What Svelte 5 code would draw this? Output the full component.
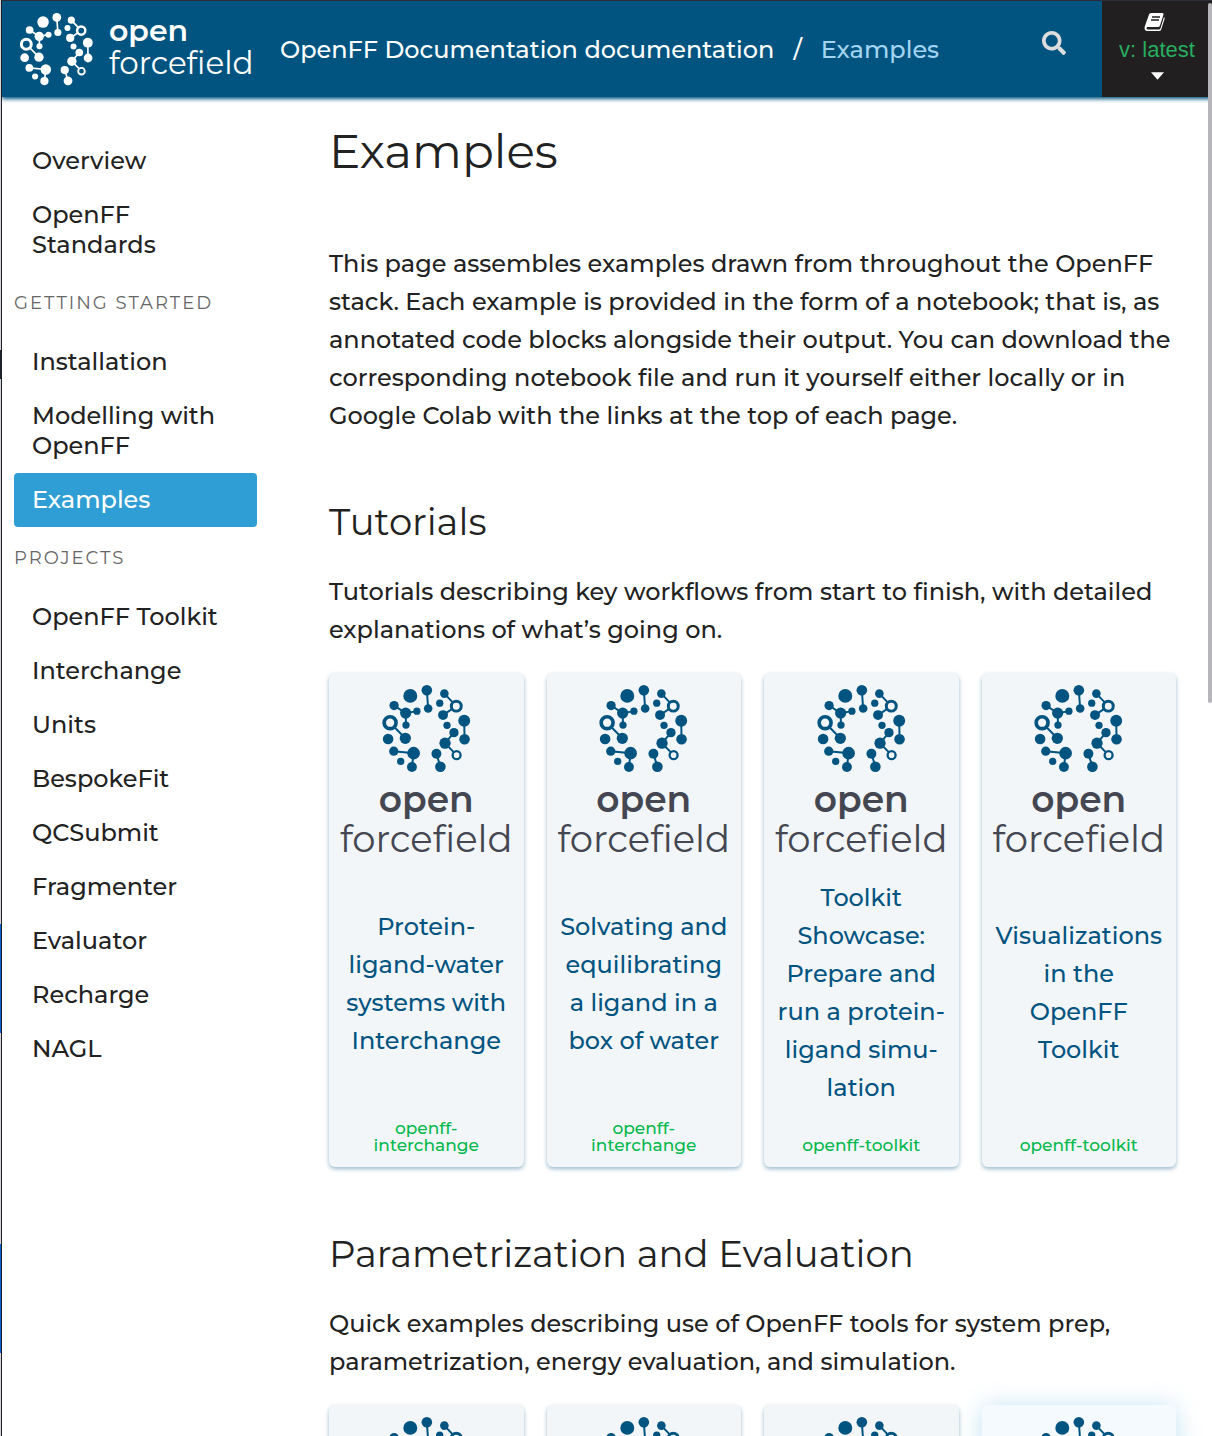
<script>
  const nav = [
    { items: ['Overview', 'OpenFF Standards'] },
    { caption: 'Getting started', items: ['Installation', 'Modelling with OpenFF', 'Examples'] },
    {
      caption: 'Projects',
      items: ['OpenFF Toolkit', 'Interchange', 'Units', 'BespokeFit', 'QCSubmit', 'Fragmenter', 'Evaluator', 'Recharge', 'NAGL']
    }
  ];
  const current = 'Examples';

  const tutorials = [
    { title: 'Protein-ligand-water systems with Interchange', pkg: 'openff-interchange' },
    { title: 'Solvating and equilibrating a ligand in a box of water', pkg: 'openff-interchange' },
    { title: 'Toolkit Showcase: Prepare and run a protein-ligand simu\u00adlation', pkg: 'openff-toolkit' },
    { title: 'Visualizations in the OpenFF Toolkit', pkg: 'openff-toolkit' }
  ];
  const evaluation = [{}, {}, {}, { active: true }];
</script>

{#snippet mark()}
  <svg class="mark" viewBox="36 14 266 266" aria-hidden="true">
    <path
      d="M170 30L174 85M223 40L259 78L219 105M71 76L106 99L140 93M106 99L107 135M59 128L105 175M70 214L130 220L125 262M199 222L211 261M252 158L225 190L260 226M283 122L284 178"
      fill="none" stroke="currentColor" stroke-width="6" />
    <g fill="currentColor">
      <circle cx="120" cy="47" r="21" /><circle cx="170" cy="30" r="16" /><circle cx="174" cy="85" r="13" />
      <circle cx="223" cy="40" r="13" /><circle cx="219" cy="105" r="15" /><circle cx="209" cy="69" r="11" />
      <circle cx="71" cy="76" r="14" /><circle cx="106" cy="99" r="17" /><circle cx="140" cy="93" r="11" />
      <circle cx="107" cy="135" r="11" /><circle cx="105" cy="175" r="17" /><circle cx="53" cy="177" r="16" />
      <circle cx="70" cy="214" r="14" /><circle cx="130" cy="220" r="19" /><circle cx="125" cy="262" r="15" />
      <circle cx="91" cy="245" r="11" /><circle cx="199" cy="222" r="15" /><circle cx="211" cy="261" r="16" />
      <circle cx="231" cy="136" r="11" /><circle cx="252" cy="158" r="14" /><circle cx="225" cy="190" r="17" />
      <circle cx="283" cy="122" r="18" /><circle cx="284" cy="178" r="16" />
    </g>
    <g class="rings" stroke="currentColor">
      <circle cx="59" cy="128" r="18" stroke-width="11" />
      <circle cx="259" cy="78" r="15" stroke-width="9" />
      <circle cx="260" cy="226" r="12" stroke-width="7" />
    </g>
  </svg>
{/snippet}

{#snippet card(item)}
  <a class="card" class:active={item.active} href="#example">
    <span class="thumb">
      {@render mark()}
      <span class="word-open">open</span>
      <span class="word-field">forcefield</span>
    </span>
    <span class="title">{item.title ?? ''}</span>
    <span class="pkg">{item.pkg ?? ''}</span>
  </a>
{/snippet}

<div class="page">
  <header>
    <a class="brand" href="#home" aria-label="open forcefield">
      {@render mark()}
      <span class="brand-text"><b>open</b><span>forcefield</span></span>
    </a>
    <nav class="crumbs" aria-label="Breadcrumb">
      <a href="#docs">OpenFF Documentation documentation</a>
      <span>/</span>
      <a class="here" href="#examples">Examples</a>
    </nav>
    <button class="search" aria-label="Search">
      <svg viewBox="0 0 512 512" width="24" height="24"><path fill="currentColor" d="M505 442.700 405.300 343c-4.500-4.500-10.600-7-17-7H372c27.600-35.300 44-79.700 44-128C416 93.100 322.900 0 208 0S0 93.100 0 208s93.100 208 208 208c48.300 0 92.700-16.400 128-44v16.300c0 6.400 2.500 12.500 7 17l99.700 99.700c9.400 9.400 24.600 9.400 33.900 0l28.300-28.300c9.400-9.400 9.400-24.600.1-34zM208 336c-70.700 0-128-57.200-128-128 0-70.700 57.200-128 128-128 70.700 0 128 57.200 128 128 0 70.700-57.200 128-128 128z" /></svg>
    </button>
    <button class="version">
      <svg class="book" viewBox="0 0 21 20" width="21" height="20" aria-hidden="true">
        <path fill="#fff" d="M7 1h11.500q1.500 0 1 1.500l-3.500 11q-.5 1.500-2 1.500H4q-1.500 0-1.500 1.200T4 17.500h11q1 0 1.400-1L20 5q1 .5.600 1.800l-3.400 10.700q-.5 1.500-2.200 1.500H3.500Q0 19 .6 15L5 2.500Q5.500 1 7 1z" />
        <path stroke="#211f1f" stroke-width="1.300" d="M8 5h8M7 8h8" />
      </svg>
      <span>v: latest</span>
      <svg viewBox="0 0 12 7" width="13" height="8" aria-hidden="true"><path fill="#fff" d="M0 0h12L6 7z" /></svg>
    </button>
  </header>

  <div class="body">
    <nav class="side" aria-label="Contents">
      {#each nav as group}
        {#if group.caption}<p class="caption">{group.caption}</p>{/if}
        <ul>
          {#each group.items as item}
            <li><a href="#{item}" class:current={item === current}>{item}</a></li>
          {/each}
        </ul>
      {/each}
    </nav>

    <main>
      <h1>Examples</h1>
      <p class="intro">This page assembles examples drawn from throughout the OpenFF stack. Each example is provided in the form of a notebook; that is, as annotated code blocks alongside their output. You can download the corresponding notebook file and run it yourself either locally or in Google Colab with the links at the top of each page.</p>
      <section>
        <h2>Tutorials</h2>
        <p>Tutorials describing key workflows from start to finish, with detailed explanations of what’s going on.</p>
        <div class="cards">{#each tutorials as item}{@render card(item)}{/each}</div>
      </section>
      <section>
        <h2>Parametrization and Evaluation</h2>
        <p>Quick examples describing use of OpenFF tools for system prep, parametrization, energy evaluation, and simulation.</p>
        <div class="cards">{#each evaluation as item}{@render card(item)}{/each}</div>
      </section>
    </main>
  </div>
  <div class="thumb-bar"></div>
</div>

<style>
  :global(body) {
    margin: 0;
    background: linear-gradient(
      #d4d4d8 350px, #1c2230 350px, #1c2230 379px, #d4d4d8 379px, #d4d4d8 924px,
      #0b5fd0 924px, #0b5fd0 1033px, #d4d4d8 1033px, #d4d4d8 1244px,
      #0b5fd0 1244px, #0b5fd0 1353px, #d4d4d8 1353px
    );
  }
  .page {
    position: relative;
    box-sizing: border-box;
    height: 100vh;
    margin-left: 1px;
    overflow: hidden;
    border-top: 1px solid #2b2d3a;
    border-left: 1px solid #1d1f26;
    background: #fff;
    font-family: Montserrat, Inter, sans-serif;
    font-size: 24px;
    font-weight: 500;
    font-variant-ligatures: none;
    color: #222;
  }
  a { color: inherit; text-decoration: none; }
  button { border: 0; padding: 0; background: none; font: inherit; }
  .mark { display: block; }
  .rings { fill: #f2f6f9; }

  header {
    position: relative;
    display: flex;
    height: 96px;
    background: #015480;
    color: #fff;
    box-shadow: 0 2px 4px #015480;
  }
  .brand { display: flex; align-items: center; width: 278px; box-sizing: border-box; padding-left: 18px; gap: 16px; }
  .brand .mark { width: 73px; height: 73px; }
  .brand .rings { fill: #015480; }
  .brand-text { display: flex; flex-direction: column; font-size: 31px; line-height: 32px; font-weight: 400; padding-bottom: 5px; }
  .brand-text b { font-size: 30px; font-weight: 600; }
  .crumbs { flex: 1; display: flex; align-items: center; gap: 19px; white-space: nowrap; }
  .crumbs .here { color: #a3d4f2; }
  .search { width: 96px; color: #ddd; padding-bottom: 12px; }
  .search svg { display: block; margin: 0 auto; }
  .version {
    display: flex;
    flex-direction: column;
    align-items: center;
    width: 110px;
    padding-top: 11px;
    background: #211f1f;
    color: #27ae60;
    font-family: "Liberation Sans", Arial, sans-serif;
    font-size: 22px;
    line-height: 36px;
  }
  .version span { margin-bottom: 4px; }
  .book { margin-right: 6px; }

  .body { display: flex; }
  .side { width: 243px; flex: none; padding: 37px 12px; }
  ul { list-style: none; margin: 0; padding: 0; }
  li a { display: block; padding: 12px 18px; line-height: 30px; border-radius: 4px; }
  li a.current { background: #2f9ed4; color: #fff; }
  .caption {
    margin: 0;
    padding: 21px 0 22px;
    font-size: 18px;
    font-weight: 400;
    line-height: 20px;
    letter-spacing: 2px;
    text-transform: uppercase;
    color: #666;
  }

  main { flex: 1; min-width: 0; padding: 26px 36px 0 60px; }
  h1, h2 { margin: 0; font-weight: 400; }
  h1 { font-size: 47px; line-height: 58px; }
  h2 { font-size: 37px; line-height: 46px; }
  p { margin: 0; line-height: 38px; }
  .intro { padding-top: 64px; }
  section { padding-top: 64px; }
  section p { padding-top: 28px; }

  .cards { display: grid; grid-template-columns: repeat(4, minmax(0, 1fr)); gap: 23px; padding-top: 24px; }
  .card {
    display: flex;
    flex-direction: column;
    min-height: 494px;
    box-sizing: border-box;
    padding: 12px 12px 13px;
    border-radius: 6px;
    background: #f2f6f9;
    box-shadow: 0 2px 4px rgba(1, 84, 128, 0.4);
    text-align: center;
  }
  .card.active { background: #f5fafe; box-shadow: 0 2px 24px rgba(47, 158, 212, 0.3); }
  .thumb { display: flex; flex-direction: column; align-items: center; color: #444751; }
  .thumb .mark { width: 89px; height: 88px; color: #015480; }
  .word-open { font-size: 36px; line-height: 44px; font-weight: 600; padding-top: 4px; }
  .word-field { font-size: 37px; line-height: 35px; font-weight: 400; }
  .title { flex: 1; display: flex; align-items: center; justify-content: center; line-height: 38px; color: #015480; }
  .pkg { padding: 8px 8px 0; font-size: 17px; line-height: 17px; color: #04b84c; }

  .thumb-bar {
    position: absolute;
    top: 2px;
    right: 0;
    width: 4px;
    height: 700px;
    border-radius: 2px;
    background: #b5b5ba;
  }
</style>
